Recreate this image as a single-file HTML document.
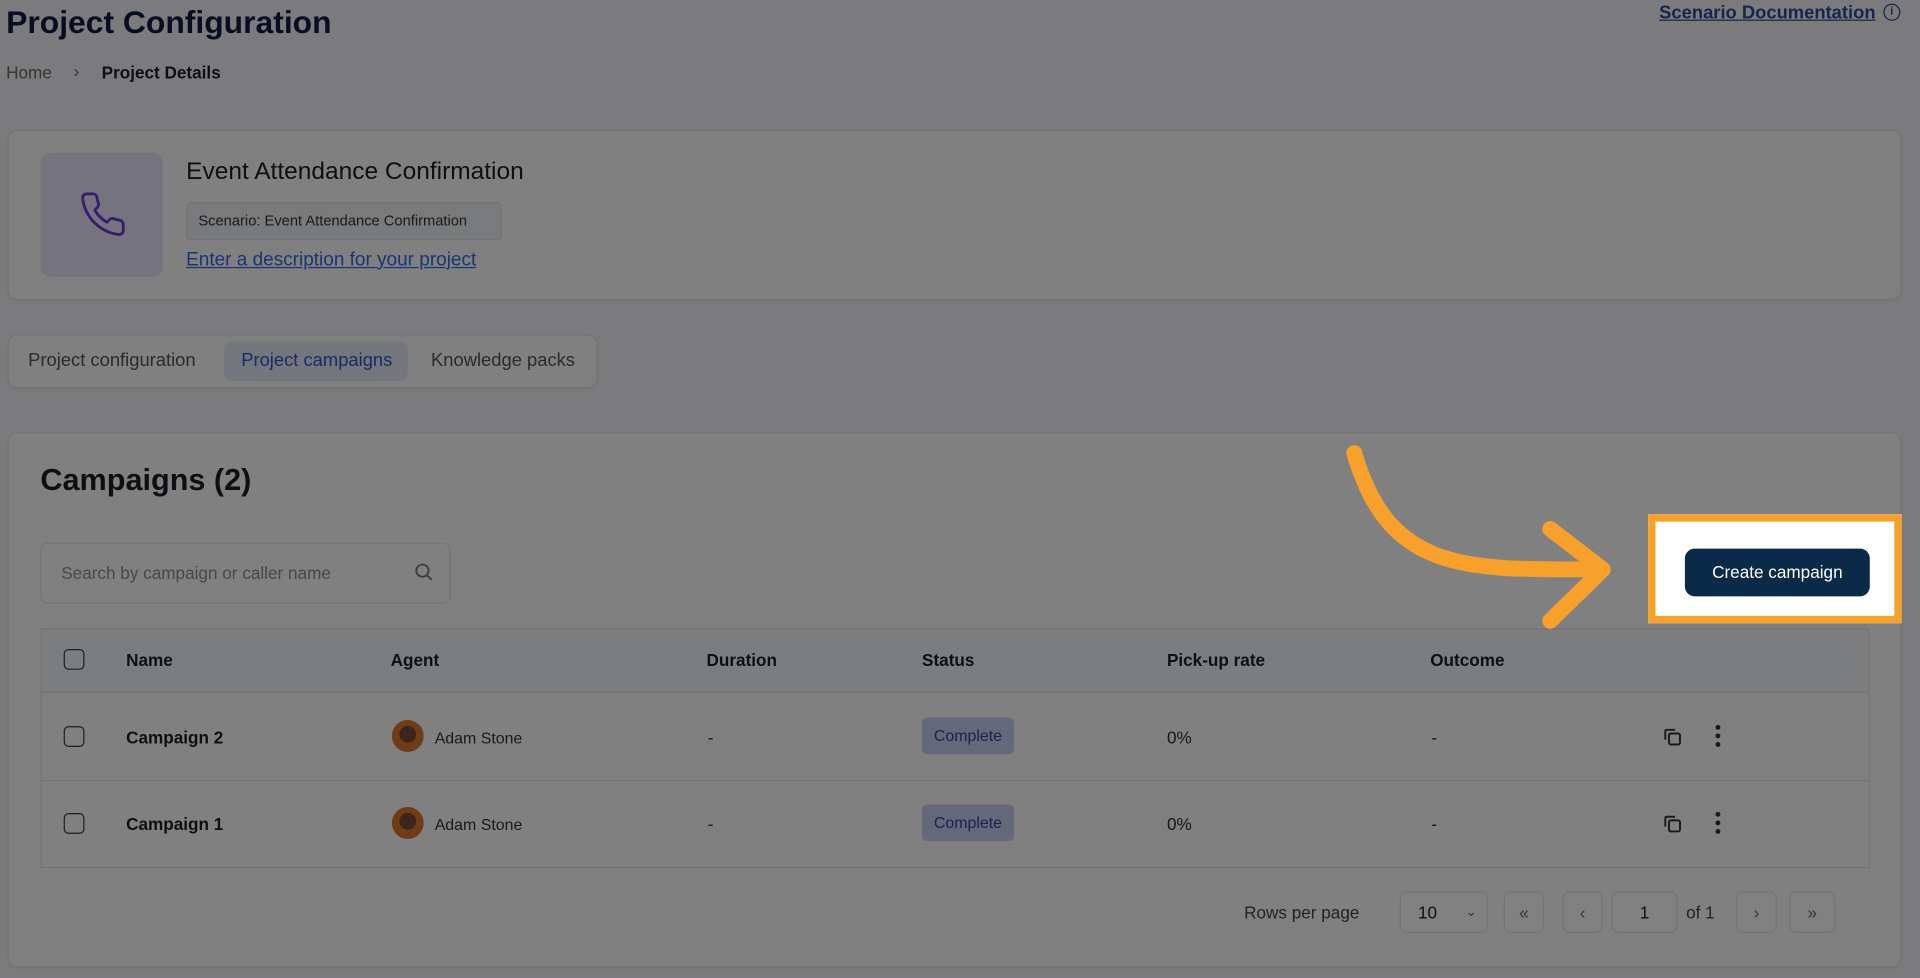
<!DOCTYPE html>
<html><head><meta charset="utf-8"><style>
*{box-sizing:border-box;margin:0;padding:0}
html,body{width:1920px;height:978px;overflow:hidden;background:#f1f2f7;font-family:"Liberation Sans",sans-serif}
#w{position:absolute;left:0;top:0;width:1568px;height:799px;transform:scale(1.22449);transform-origin:0 0}
.a{position:absolute}
.card{background:#fcfcfd;border:1px solid #dfe1e6;border-radius:8px;box-shadow:0 1px 2px rgba(0,0,0,.06)}
.th{font-weight:bold;font-size:14px;color:#1c1f26}
.cb{width:17px;height:17px;border:1.6px solid #3a3d44;border-radius:4px}
.td{font-size:14px;color:#2a2d33}
.pb{border:1px solid #e2e4e8;border-radius:6px;height:34px;background:#fdfdfd;font-size:14px;color:#666;text-align:center;line-height:32px}
</style></head><body><div id="w">
<div class="a" style="left:5px;top:3px;font-size:26px;font-weight:bold;color:#0f1c42">Project Configuration</div>
<div class="a" style="left:5px;top:51px;font-size:14px;color:#666">Home</div>
<div class="a" style="left:60px;top:50px;font-size:14px;color:#666">›</div>
<div class="a" style="left:83px;top:51px;font-size:14px;font-weight:bold;color:#1c1f26">Project Details</div>
<div class="a" style="left:1355px;top:2px;font-size:15px;font-weight:bold;color:#2b4a99;text-decoration:underline">Scenario Documentation</div>
<div class="a" style="left:1538px;top:3px;width:14px;height:14px;border:1.4px solid #2b4a99;border-radius:50%;font-size:9px;color:#2b4a99;text-align:center;line-height:11px;font-weight:bold">i</div>

<div class="a card" style="left:6px;top:106px;width:1547px;height:139px"></div>
<div class="a" style="left:33px;top:125px;width:100px;height:101px;background:#e6e1f6;border-radius:8px"></div>
<svg class="a" style="left:64px;top:155px" width="40" height="40" viewBox="0 0 24 24" fill="none" stroke="#6a3bd6" stroke-width="1.4" stroke-linecap="round" stroke-linejoin="round"><path d="M22 16.9v3a2 2 0 0 1-2.2 2 19.8 19.8 0 0 1-8.6-3.1 19.5 19.5 0 0 1-6-6A19.8 19.8 0 0 1 2.1 4.2 2 2 0 0 1 4.1 2h3a2 2 0 0 1 2 1.7c.1 1 .4 1.9.7 2.8a2 2 0 0 1-.5 2.1L8 9.9a16 16 0 0 0 6 6l1.3-1.3a2 2 0 0 1 2.1-.4c.9.3 1.8.6 2.8.7a2 2 0 0 1 1.7 2z"/></svg>
<div class="a" style="left:152px;top:129px;font-size:20px;color:#1c1f26">Event Attendance Confirmation</div>
<div class="a" style="left:152px;top:165px;width:258px;height:31px;background:#eef0f3;border:1px solid #dcdfe4;border-radius:4px;font-size:12px;color:#333;line-height:29px;padding-left:9px">Scenario: Event Attendance Confirmation</div>
<div class="a" style="left:152px;top:204px;font-size:15.5px;color:#2e6ae0;text-decoration:underline">Enter a description for your project</div>

<div class="a card" style="left:6px;top:273px;width:482px;height:44px"></div>
<div class="a" style="left:23px;top:286px;font-size:15px;color:#555">Project configuration</div>
<div class="a" style="left:183px;top:279px;width:150px;height:32px;background:#e2eaf6;border-radius:6px"></div>
<div class="a" style="left:197px;top:286px;font-size:15px;color:#2f55c8">Project campaigns</div>
<div class="a" style="left:352px;top:286px;font-size:15px;color:#555">Knowledge packs</div>

<div class="a card" style="left:6px;top:353px;width:1547px;height:437px"></div>
<div class="a" style="left:33px;top:378px;font-size:25px;font-weight:bold;color:#1c1f26">Campaigns (2)</div>
<div class="a" style="left:33px;top:443px;width:335px;height:50px;border:1px solid #dfe1e6;border-radius:6px;background:#fcfcfd"></div>
<div class="a" style="left:50px;top:460px;font-size:14px;color:#8a8d93">Search by campaign or caller name</div>
<svg class="a" style="left:338px;top:459px" width="16" height="16" viewBox="0 0 16 16" fill="none" stroke="#777" stroke-width="1.5"><circle cx="7" cy="7" r="5"/><path d="M11 11l3.5 3.5"/></svg>

<div class="a" style="left:33px;top:513px;width:1494px;height:196px;border:1px solid #e2e4e8;background:#fcfcfd"></div>
<div class="a" style="left:34px;top:514px;width:1492px;height:52px;background:#f4f5f7;border-bottom:1px solid #e2e4e8"></div>
<div class="a" style="left:34px;top:637px;width:1492px;height:1px;background:#e2e4e8"></div>
<div class="a cb" style="left:52px;top:530px"></div>
<div class="a th" style="left:103px;top:531px">Name</div>
<div class="a th" style="left:319px;top:531px">Agent</div>
<div class="a th" style="left:577px;top:531px">Duration</div>
<div class="a th" style="left:753px;top:531px">Status</div>
<div class="a th" style="left:953px;top:531px">Pick-up rate</div>
<div class="a th" style="left:1168px;top:531px">Outcome</div>

<div class="a cb" style="left:52px;top:593px"></div>
<div class="a th" style="left:103px;top:594px">Campaign 2</div>
<div class="a" style="left:320px;top:588px;width:26px;height:26px;border-radius:50%;background:radial-gradient(circle at 50% 45%,#7a4a35 0 35%,#d9772a 36% 70%,#c24a3a 71%)"></div>
<div class="a" style="left:355px;top:595px;font-size:13px;color:#333">Adam Stone</div>
<div class="a td" style="left:578px;top:594px">-</div>
<div class="a" style="left:753px;top:586px;width:75px;height:30px;background:#c7caf1;border-radius:4px;font-size:13px;color:#3b3f9a;text-align:center;line-height:30px">Complete</div>
<div class="a td" style="left:953px;top:594px">0%</div>
<div class="a td" style="left:1169px;top:594px">-</div>

<div class="a cb" style="left:52px;top:664px"></div>
<div class="a th" style="left:103px;top:665px">Campaign 1</div>
<div class="a" style="left:320px;top:659px;width:26px;height:26px;border-radius:50%;background:radial-gradient(circle at 50% 45%,#7a4a35 0 35%,#d9772a 36% 70%,#c24a3a 71%)"></div>
<div class="a" style="left:355px;top:666px;font-size:13px;color:#333">Adam Stone</div>
<div class="a td" style="left:578px;top:665px">-</div>
<div class="a" style="left:753px;top:657px;width:75px;height:30px;background:#c7caf1;border-radius:4px;font-size:13px;color:#3b3f9a;text-align:center;line-height:30px">Complete</div>
<div class="a td" style="left:953px;top:665px">0%</div>
<div class="a td" style="left:1169px;top:665px">-</div>

<svg class="a" style="left:1357px;top:593px" width="18" height="18" viewBox="0 0 18 18" fill="none" stroke="#333" stroke-width="1.6"><rect x="6" y="6" width="9" height="9" rx="1.5"/><path d="M3 11V4a1 1 0 0 1 1-1h7"/></svg>
<svg class="a" style="left:1396px;top:591px" width="14" height="20" viewBox="0 0 14 20" fill="#333"><circle cx="7" cy="3" r="2"/><circle cx="7" cy="10" r="2"/><circle cx="7" cy="17" r="2"/></svg>
<svg class="a" style="left:1357px;top:664px" width="18" height="18" viewBox="0 0 18 18" fill="none" stroke="#333" stroke-width="1.6"><rect x="6" y="6" width="9" height="9" rx="1.5"/><path d="M3 11V4a1 1 0 0 1 1-1h7"/></svg>
<svg class="a" style="left:1396px;top:662px" width="14" height="20" viewBox="0 0 14 20" fill="#333"><circle cx="7" cy="3" r="2"/><circle cx="7" cy="10" r="2"/><circle cx="7" cy="17" r="2"/></svg>

<div class="a" style="left:1016px;top:737px;font-size:14px;color:#444">Rows per page</div>
<div class="a pb" style="left:1143px;top:728px;width:72px;text-align:left;padding-left:14px;color:#222">10<span style="position:absolute;right:8px;top:0;font-size:11px;color:#666">⌄</span></div>
<div class="a pb" style="left:1228px;top:728px;width:33px">«</div>
<div class="a pb" style="left:1276px;top:728px;width:33px">‹</div>
<div class="a pb" style="left:1316px;top:728px;width:54px;color:#222">1</div>
<div class="a" style="left:1377px;top:737px;font-size:14px;color:#444">of 1</div>
<div class="a pb" style="left:1418px;top:728px;width:33px">›</div>
<div class="a pb" style="left:1461px;top:728px;width:38px">»</div>

<div class="a" style="left:0;top:0;width:1568px;height:799px;background:rgba(0,0,0,0.49)"></div>

<div class="a" style="left:1346px;top:420px;width:207px;height:89px;background:#fff;border:6px solid #f7a12c"></div>
<div class="a" style="left:1376px;top:448px;width:151px;height:39px;background:#0b2a47;border-radius:8px;color:#fff;font-size:14px;text-align:center;line-height:39px">Create campaign</div>
<svg class="a" style="left:0;top:0" width="1568" height="799" fill="none" stroke="#f7a12c" stroke-width="13" stroke-linecap="round" stroke-linejoin="round"><path d="M1106 370C1135 470 1200 465 1308 465"/><path d="M1266 432L1309 465L1266 507"/></svg>
</div></body></html>
